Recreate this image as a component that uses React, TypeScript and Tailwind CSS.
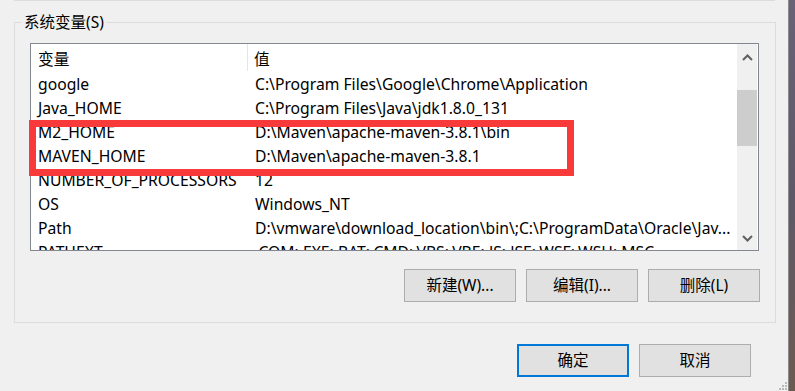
import React from "react";

const rows: [string, string][] = [
  ["google", "C:\\Program Files\\Google\\Chrome\\Application"],
  ["Java_HOME", "C:\\Program Files\\Java\\jdk1.8.0_131"],
  ["M2_HOME", "D:\\Maven\\apache-maven-3.8.1\\bin"],
  ["MAVEN_HOME", "D:\\Maven\\apache-maven-3.8.1"],
  ["NUMBER_OF_PROCESSORS", "12"],
  ["OS", "Windows_NT"],
  ["Path", "D:\\vmware\\download_location\\bin\\;C:\\ProgramData\\Oracle\\Jav..."],
  ["PATHEXT", ".COM;.EXE;.BAT;.CMD;.VBS;.VBE;.JS;.JSE;.WSF;.WSH;.MSC"],
];

const font = {
  fontFamily: '"Noto Sans", "Noto Sans CJK SC", sans-serif',
};

function Btn({ label, primary }: { label: string; primary?: boolean }) {
  return (
    <div
      className={
        "w-[112px] h-[33px] flex items-center justify-center bg-[#e1e1e1] text-[15.5px] text-black " +
        (primary ? "border-2 border-[#0078d7]" : "border border-[#adadad]")
      }
    >
      {label}
    </div>
  );
}

export default function App() {
  return (
    <div
      className="w-[795px] h-[391px] flex overflow-hidden bg-[#f0f0f0]"
      style={font}
    >
      <div className="w-[789px] h-full relative flex flex-col border-r border-[#8a8a8a]">
        <div className="ml-[14px] w-[761px] h-[1px] border-l border-b border-[#dcdcdc]" />
        <fieldset className="ml-[14px] mt-[11px] w-[762px] h-[311px] border border-[#dcdcdc] p-0">
          <legend className="ml-[7px] px-[2px] h-[20px] leading-[20px] text-[15.5px] text-black">
            系统变量(S)
          </legend>
          <div className="px-[15px]">
            <div className="mt-[11px] w-[729px] h-[208px] border border-[#828790] bg-white flex overflow-hidden">
              <div className="flex-1 flex flex-col text-[15.7px] text-black">
                <div className="h-[27px] shrink-0 flex items-center">
                  <div className="w-[217px] h-full pl-[7px] pt-[4px] flex items-center border-r border-[#e5e5e5]">
                    变量
                  </div>
                  <div className="pl-[6px] pt-[4px]">值</div>
                </div>
                {rows.map(([k, v]) => (
                  <div key={k} className="h-[24px] shrink-0 pt-[4px] flex items-center whitespace-nowrap">
                    <div className="w-[217px] pl-[7px]">{k}</div>
                    <div className="pl-[7px]">{v}</div>
                  </div>
                ))}
              </div>
              <div className="w-[21px] shrink-0 bg-[#f0f0f0] flex flex-col items-center border-r border-white">
                <div className="h-[27px] w-full flex items-center justify-center">
                  <svg width="11" height="7" viewBox="0 0 11 7">
                    <path d="M1 6 L5.5 1.5 L10 6" fill="none" stroke="#606060" strokeWidth="2" />
                  </svg>
                </div>
                <div className="mt-[19px] h-[56px] w-[20px] bg-[#cdcdcd]" />
                <div className="flex-1" />
                <div className="h-[24px] w-full flex items-center justify-center">
                  <svg width="11" height="7" viewBox="0 0 11 7">
                    <path d="M1 1 L5.5 5.5 L10 1" fill="none" stroke="#606060" strokeWidth="2" />
                  </svg>
                </div>
              </div>
            </div>
            <div className="mt-[18px] flex justify-end gap-[10px]">
              <Btn label="新建(W)..." />
              <Btn label="编辑(I)..." />
              <Btn label="删除(L)" />
            </div>
          </div>
        </fieldset>
        <div className="mt-[21px] flex justify-end gap-[10px] pr-[37px]">
          <Btn label="确定" primary />
          <Btn label="取消" />
        </div>
        <div className="absolute left-[29px] top-[120px] w-[545px] h-[56px] border-[7px] border-[#f83a3a]" />
        <svg className="absolute right-[1px] bottom-[1px]" width="8" height="8" viewBox="0 0 8 8">
          <rect x="6" y="0" width="2" height="2" fill="#b8b8b8" />
          <rect x="3" y="3" width="2" height="2" fill="#b8b8b8" />
          <rect x="6" y="3" width="2" height="2" fill="#b8b8b8" />
          <rect x="0" y="6" width="2" height="2" fill="#b8b8b8" />
          <rect x="3" y="6" width="2" height="2" fill="#b8b8b8" />
          <rect x="6" y="6" width="2" height="2" fill="#b8b8b8" />
        </svg>
      </div>
      <div className="flex-1 h-full bg-gradient-to-b from-[#6a6278] via-[#5e5868] to-[#6d5a50]" />
    </div>
  );
}
